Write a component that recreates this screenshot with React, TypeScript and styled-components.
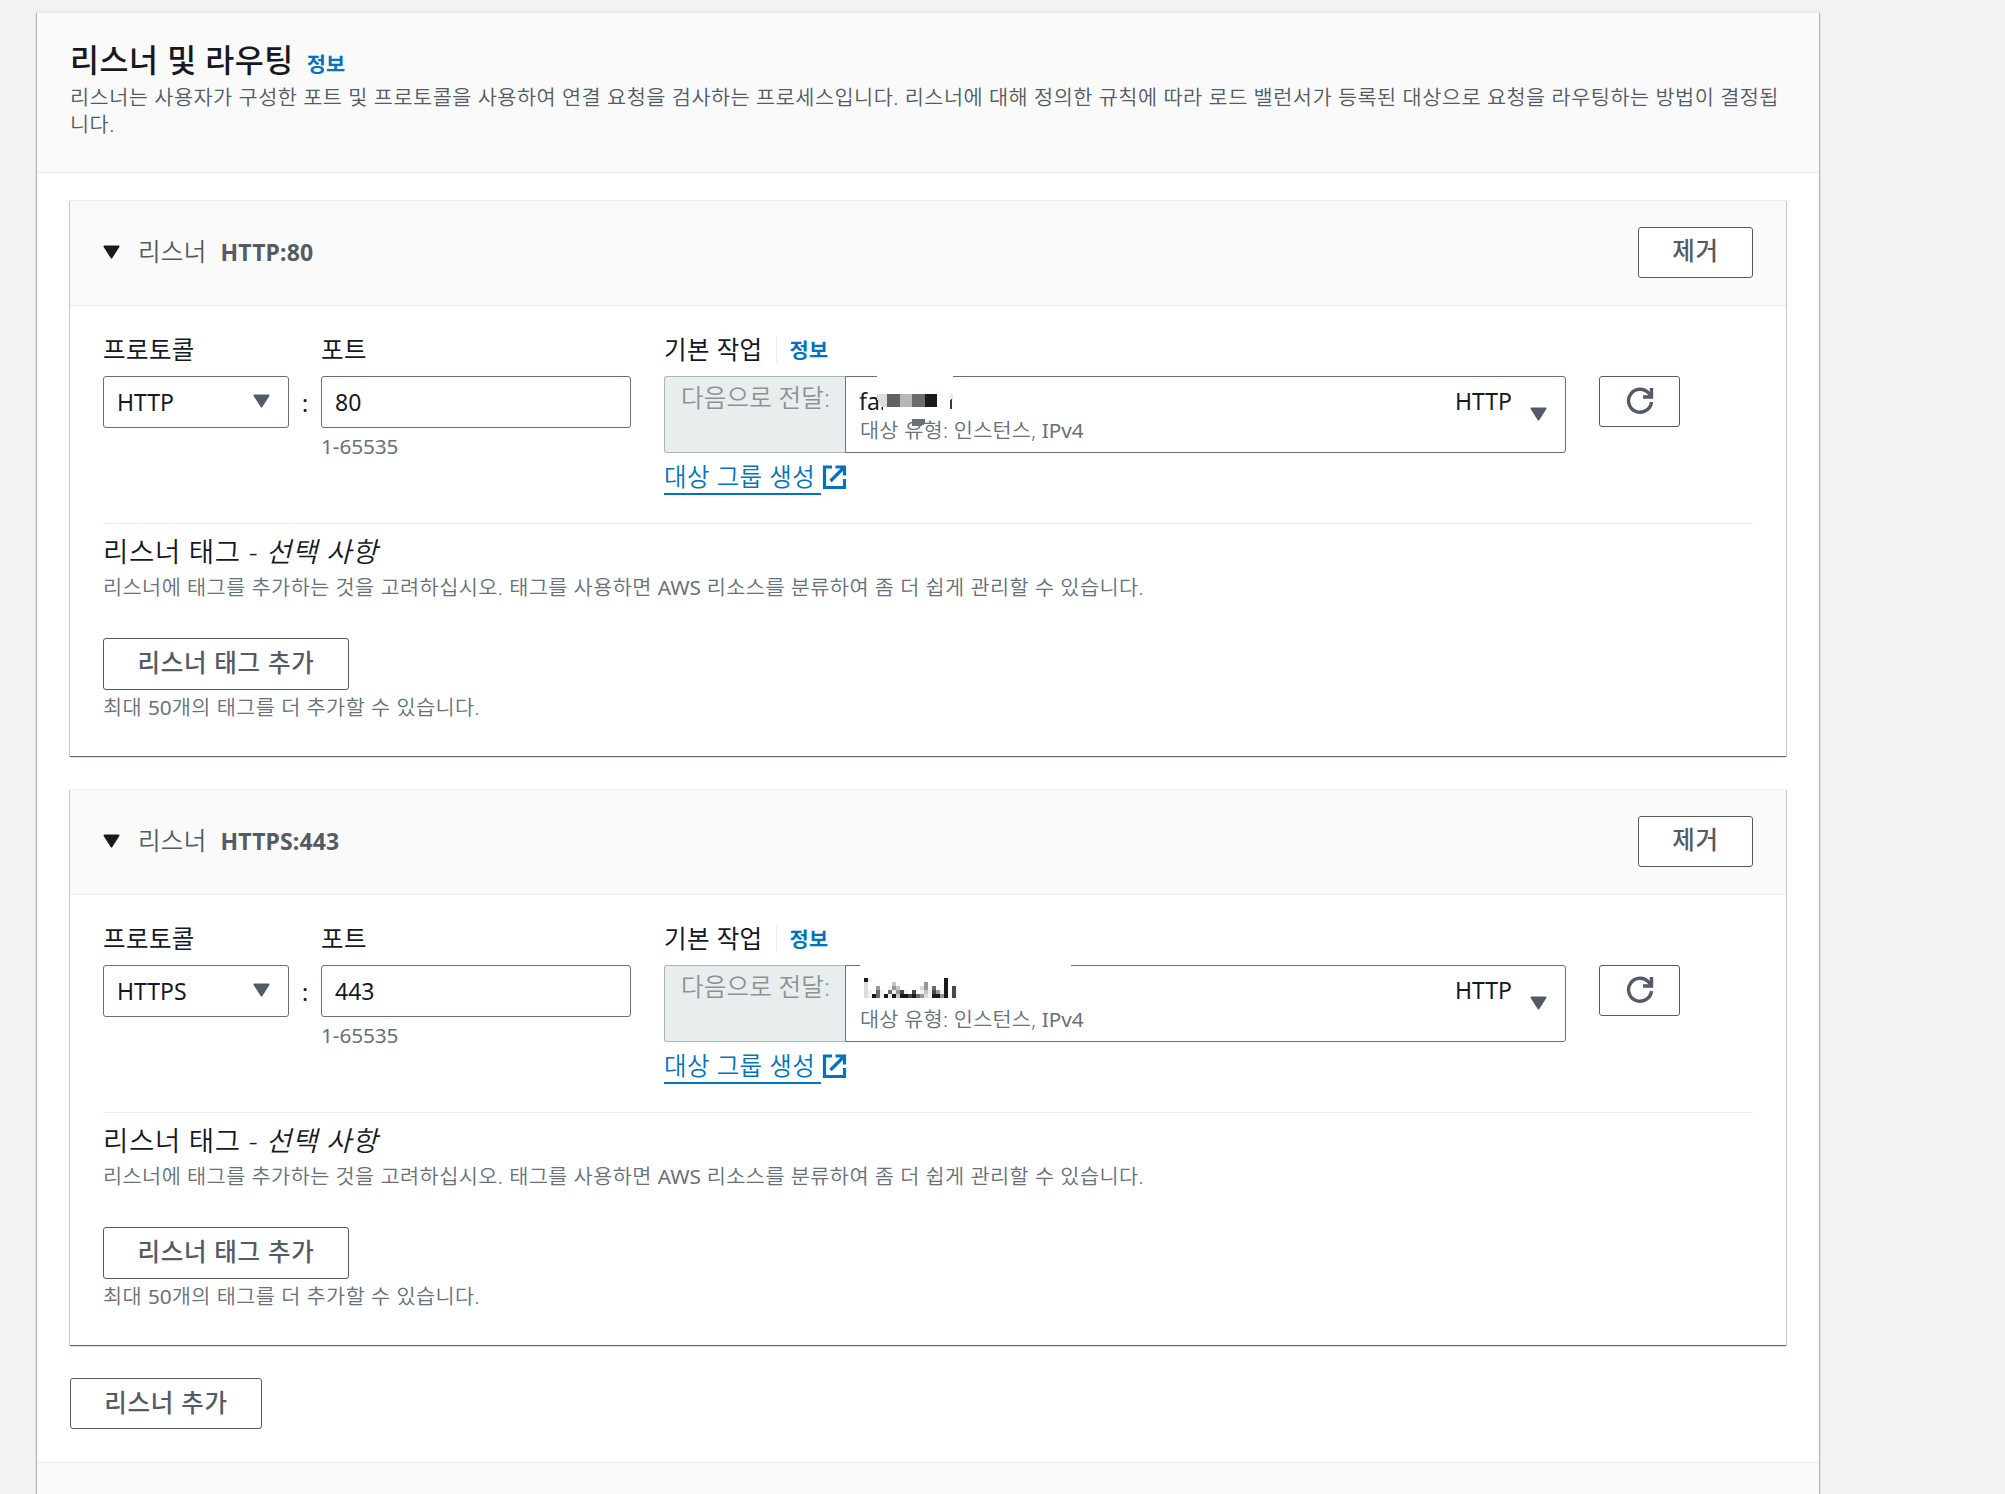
import * as React from 'react';
import styled, { createGlobalStyle } from 'styled-components';

interface IListener {
  protocol: string;
  port: string;
  gap: { left: number; width: number };
  name: React.ReactNode;
}

const GlobalStyle = createGlobalStyle`
  * {
    box-sizing: border-box;
  }
  body {
    margin: 0;
    background: #f1f3f3;
    color: #16191f;
    font-family: 'Noto Sans', 'Noto Sans CJK KR', sans-serif;
    font-size: 23px;
    line-height: 36px;
  }
`;

const Page = styled.main`
  height: 1494px;
  padding: 12px 186px 0 37px;
  overflow: hidden;
`;

const Panel = styled.section`
  height: 1500px;
  background: #fff;
  border-top: 1px solid #eaeded;
  box-shadow: 0 1px 2px 0 rgba(0, 28, 36, 0.5), 1px 1px 1px 0 rgba(0, 28, 36, 0.15), -1px 1px 1px 0 rgba(0, 28, 36, 0.15);
`;

const PanelHeader = styled.header`
  height: 160px;
  padding: 27px 33px 0;
  background: #fafafa;
  border-bottom: 1px solid #eaeded;
`;

const TitleRow = styled.div`
  display: flex;
  align-items: baseline;
  gap: 13px;
  height: 40px;
`;

const Title = styled.h2`
  margin: 0;
  font-size: 31.5px;
  line-height: 40px;
  font-weight: 500;
  letter-spacing: 0.5px;
`;

const InfoLink = styled.a`
  color: #0073bb;
  font-size: 20.8px;
  line-height: 27px;
  font-weight: 600;
`;

const Description = styled.p`
  margin: 4px 0 0;
  color: #545b64;
  font-size: 20.8px;
  font-weight: 350;
  line-height: 27px;
  letter-spacing: 0.47px;
  word-break: break-all;
`;

const PanelBody = styled.div`
  display: flex;
  flex-direction: column;
  align-items: flex-start;
  height: 1289px;
  padding: 27px 33px 0;
`;

const Card = styled.article`
  width: 100%;
  height: 556px;
  margin-bottom: 33px;
  background: #fff;
  border-top: 1px solid #eaeded;
  box-shadow: 0 1px 1px 0 rgba(0, 28, 36, 0.5), 1px 1px 1px 0 rgba(0, 28, 36, 0.15), -1px 1px 1px 0 rgba(0, 28, 36, 0.15);
`;

const CardHeader = styled.header`
  display: flex;
  align-items: center;
  height: 105px;
  padding: 0 33px 2px;
  background: #fafafa;
  border-bottom: 1px solid #eaeded;
  color: #545b64;
`;

const CardTitle = styled.span`
  display: flex;
  flex: 1;
  margin-left: 18px;
  font-size: 24.5px;
  font-weight: 350;
  letter-spacing: 0.3px;

  b {
    margin-left: 14px;
    font-size: 23px;
    font-weight: 700;
    letter-spacing: 0.15px;
  }
`;

const Button = styled.button<{ $width: number; $height?: number }>`
  width: ${(p) => p.$width}px;
  height: ${(p) => p.$height || 51}px;
  padding: 0 0 2px;
  display: flex;
  align-items: center;
  justify-content: center;
  flex: none;
  border: 1px solid #545b64;
  border-radius: 3px;
  background: #fff;
  color: #545b64;
  font: inherit;
  font-size: 24.5px;
  font-weight: 500;
  letter-spacing: 0.7px;
`;

const CardBody = styled.div`
  padding: 24px 33px 0;
`;

const Fields = styled.div`
  display: flex;
  height: 194px;
  border-bottom: 1px solid #eaeded;
`;

const Field = styled.div<{ $width: number }>`
  width: ${(p) => p.$width}px;
`;

const Label = styled.div`
  display: flex;
  align-items: center;
  height: 46px;
  padding-bottom: 6px;
  font-size: 24.5px;
  letter-spacing: 0.4px;
`;

const LabelInfo = styled(InfoLink)`
  margin-left: 13px;
  padding-left: 13px;
  border-left: 1px solid #eaeded;
`;

const Box = styled.div`
  display: flex;
  align-items: center;
  justify-content: space-between;
  height: 52px;
  padding: 0 18px 1px 13px;
  border: 1px solid #687078;
  border-radius: 3px;
`;

const Colon = styled.span`
  width: 32px;
  padding-top: 55px;
  text-align: center;
`;

const Hint = styled.div`
  color: #687078;
  font-size: 20.8px;
  font-weight: 350;
  line-height: 27px;
  letter-spacing: 0.42px;
`;

// the hangul in hints is a light cut, latin letters and digits are regular
const Latin = styled.span`
  font-weight: 400;
  letter-spacing: 0;
`;

const PortHint = styled(Hint)`
  padding-top: 5px;
  font-weight: 400;
  letter-spacing: -0.1px;
`;

const TargetRow = styled.div`
  display: flex;
  height: 77px;
`;

const Prefix = styled.div`
  width: 181px;
  padding: 3px 0 0 16px;
  border: 1px solid #aab7b8;
  border-right: 0;
  border-radius: 3px 0 0 3px;
  background: #eaeded;
  color: #879596;
  font-size: 24.5px;
  font-weight: 350;
  letter-spacing: 0.2px;
  white-space: nowrap;
`;

const TargetBox = styled.div`
  position: relative;
  display: flex;
  width: 721px;
  padding: 6px 18px 0 13px;
  border: 1px solid #687078;
  border-radius: 0 3px 3px 0;
`;

const TargetText = styled.div`
  flex: 1;
`;

const TargetName = styled.div`
  height: 34px;
`;

const TargetType = styled(Hint)`
  padding-left: 1px;
  letter-spacing: 0.2px;
`;

const BorderGap = styled.i<{ $left: number; $width: number }>`
  position: absolute;
  top: -1px;
  left: ${(p) => p.$left}px;
  width: ${(p) => p.$width}px;
  height: 1px;
  background: #fff;
`;

// pixelated blocks lie over the target group name
const Redaction = styled.svg<{ $left: number; $top: number }>`
  position: absolute;
  left: ${(p) => p.$left}px;
  top: ${(p) => p.$top}px;
`;

const TargetArrow = styled.div`
  padding: 12px 0 0 18px;
`;

const CreateLink = styled.a`
  display: flex;
  align-items: center;
  height: 41px;
  margin-top: 3px;
  color: #0073bb;
  font-size: 24.5px;
  font-weight: 350;
  letter-spacing: 0.4px;

  span {
    height: 37px;
    padding-right: 6px;
    border-bottom: 2px solid #0073bb;
    line-height: 37px;
  }

  svg {
    margin: 1px 0 0 1px;
  }
`;

const Refresh = styled.div`
  padding: 46px 0 0 33px;
`;

const TagTitle = styled.div`
  margin-top: 10px;
  font-size: 27.5px;
  font-weight: 350;
  letter-spacing: 0.7px;
`;

const TagHint = styled(Hint)`
  margin: 4px 0 37px;
`;

const TagLimit = styled(Hint)`
  margin-top: 4px;
`;

const PanelFooter = styled.footer`
  height: 60px;
  border-top: 1px solid #eaeded;
  background: #fafafa;
`;

const Caret = ({ color = '#545b64' }: { color?: string }) => (
  <svg width="17" height="15" viewBox="0 0 17 15">
    <path d="M1.5 1.5h14l-7 11z" fill={color} stroke={color} strokeWidth="2" strokeLinejoin="round" />
  </svg>
);

const ExternalIcon = () => (
  <svg width="25" height="26" viewBox="0 0 25 26" fill="none" stroke="#0073bb" strokeWidth="3.2">
    <path d="M10 3H2.500v20.500h20V15M13.500 3h9v8.500M22 3.500 8.500 17" />
  </svg>
);

const RefreshIcon = () => (
  <svg width="28" height="28" viewBox="0 0 28 28" fill="none" stroke="#545b64" strokeWidth="3.4">
    <path d="M25.500 15a11.500 11.500 0 1 1-2.500-8.500l3 3.500M25.500 1v9H17" />
  </svg>
);

const PIXEL = 4;
const SHADES: Record<string, string> = {
  a: '#16191f', b: '#46484d', c: '#6b6c70', d: '#97989b', e: '#c4c5c7', f: '#dcdcdd', g: '#f0f0f1',
};
const MOSAIC = [
  'ag..................a..',
  'f......e.......d....a..',
  'f..d..gde.....fd.c..a.b',
  'fg.cg.cgdbg.b.gegbdga.b',
  'fgacgagaeaabacdfgaada.b',
];

const PixelName = () => (
  <Redaction $left={18} $top={12} width={92} height={20} shapeRendering="crispEdges">
    {MOSAIC.map((row, y) => row.split('').map((shade, x) => (
      SHADES[shade] && (
        <rect key={`${x}-${y}`} x={x * PIXEL} y={y * PIXEL} width={PIXEL} height={PIXEL} fill={SHADES[shade]} />
      )
    )))}
  </Redaction>
);

const BlockName = () => (
  <React.Fragment>
    fa.
    <Redaction $left={31} $top={9} width={80} height={42} shapeRendering="crispEdges">
      <path d="M6 7h66v17H6zM26 26h22v8H26z" fill="#fff" />
      <path d="M0 8h10v13H5l-5-8z" fill="#dcdcdd" />
      <path d="M10 8h13v13H10z" fill="#606166" />
      <path d="M23 8h12v13H23z" fill="#b6b7b9" />
      <path d="M35 8h13v13H35z" fill="#6b6c70" />
      <path d="M48 8h12v13H48z" fill="#16191f" />
      <path d="M73 8h3v6h-3z" fill="#eaeaeb" />
      <path d="M73 14l2-2v11h-2z" fill="#35373c" />
      <path d="M35 33h13v5l-4 2h-9z" fill="#687078" />
    </Redaction>
  </React.Fragment>
);

const listeners: IListener[] = [
  { protocol: 'HTTP', port: '80', gap: { left: 31, width: 76 }, name: <BlockName /> },
  { protocol: 'HTTPS', port: '443', gap: { left: 14, width: 211 }, name: <PixelName /> },
];

const ListenerCard = ({ protocol, port, gap, name }: IListener) => (
  <Card>
    <CardHeader>
      <Caret color="#16191f" />
      <CardTitle>
        리스너 <b>{protocol}:{port}</b>
      </CardTitle>
      <Button $width={115}>제거</Button>
    </CardHeader>
    <CardBody>
      <Fields>
        <Field $width={186}>
          <Label>프로토콜</Label>
          <Box>{protocol}<Caret /></Box>
        </Field>
        <Colon>:</Colon>
        <Field $width={343}>
          <Label>포트</Label>
          <Field $width={310}>
            <Box>{port}</Box>
            <PortHint>1-65535</PortHint>
          </Field>
        </Field>
        <Field $width={902}>
          <Label>
            기본 작업
            <LabelInfo>정보</LabelInfo>
          </Label>
          <TargetRow>
            <Prefix>다음으로 전달:</Prefix>
            <TargetBox>
              <BorderGap $left={gap.left} $width={gap.width} />
              <TargetText>
                <TargetName>{name}</TargetName>
                <TargetType>대상 유형: 인스턴스, <Latin>IPv4</Latin></TargetType>
              </TargetText>
              HTTP
              <TargetArrow><Caret /></TargetArrow>
            </TargetBox>
          </TargetRow>
          <CreateLink><span>대상 그룹 생성</span><ExternalIcon /></CreateLink>
        </Field>
        <Refresh>
          <Button $width={81}><RefreshIcon /></Button>
        </Refresh>
      </Fields>
      <TagTitle>리스너 태그 - <i>선택 사항</i></TagTitle>
      <TagHint>
        리스너에 태그를 추가하는 것을 고려하십시오. 태그를 사용하면 <Latin>AWS</Latin> 리소스를 분류하여 좀 더 쉽게 관리할 수 있습니다.
      </TagHint>
      <Button $width={246} $height={52}>리스너 태그 추가</Button>
      <TagLimit>최대 <Latin>50</Latin>개의 태그를 더 추가할 수 있습니다.</TagLimit>
    </CardBody>
  </Card>
);

const App = () => (
  <Page>
    <GlobalStyle />
    <Panel>
      <PanelHeader>
        <TitleRow>
          <Title>리스너 및 라우팅</Title>
          <InfoLink>정보</InfoLink>
        </TitleRow>
        <Description>
          리스너는 사용자가 구성한 포트 및 프로토콜을 사용하여 연결 요청을 검사하는 프로세스입니다. 리스너에 대해 정의한 규칙에 따라 로드 밸런서가 등록된 대상으로 요청을 라우팅하는 방법이 결정됩니다.
        </Description>
      </PanelHeader>
      <PanelBody>
        {listeners.map((l) => <ListenerCard key={l.port} {...l} />)}
        <Button $width={192}>리스너 추가</Button>
      </PanelBody>
      <PanelFooter />
    </Panel>
  </Page>
);

export default App;
